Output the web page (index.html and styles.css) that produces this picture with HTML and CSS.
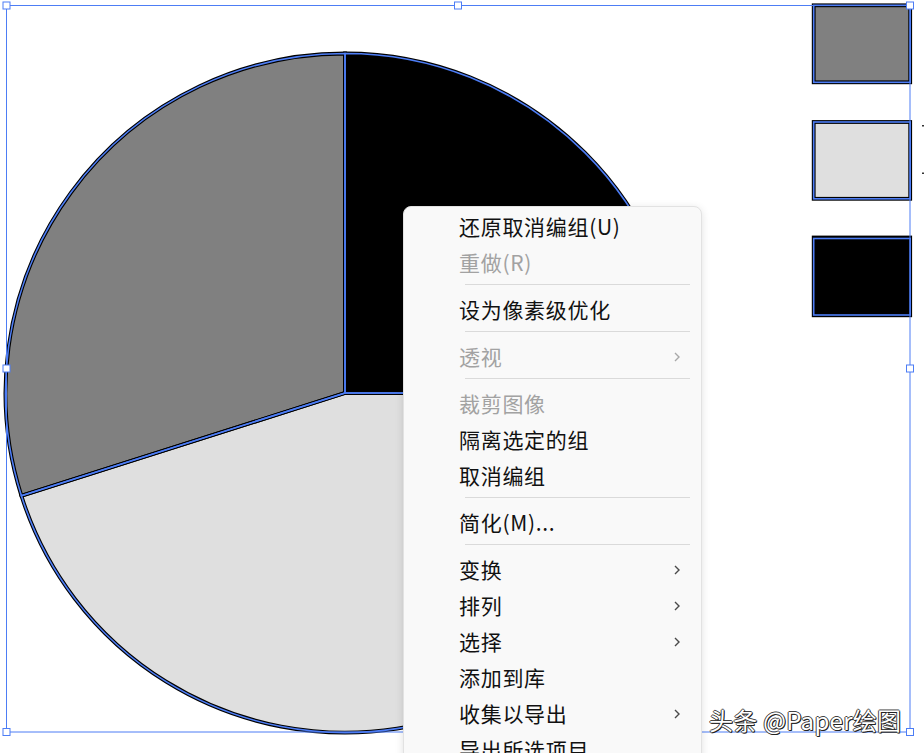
FILE: index.html
```html
<!DOCTYPE html>
<html lang="zh-CN">
<head>
    <meta charset="UTF-8">
    <meta name="viewport" content="width=device-width, initial-scale=1.0">
    <title>取消编组</title>
    <link rel="stylesheet" href="styles.css">
</head>
<body>
    <div class="artboard">
        <svg class="canvas" width="924" height="753" viewBox="0 0 924 753">
            <!-- pie slices -->
            <g>
                <path class="slice-dark" d="M345,393 L345,53.5 A339.5,339.5 0 0 1 684.5,393 Z"/>
                <path class="slice-light" d="M345,393 L684.5,393 A339.5,339.5 0 0 1 21.4,495.8 Z"/>
                <path class="slice-mid" d="M345,393 L21.4,495.8 A339.5,339.5 0 0 1 345,53.5 Z"/>
            </g>
            <g class="outline">
                <path d="M345,393 L345,53.5 A339.5,339.5 0 0 1 684.5,393 Z"/>
                <path d="M345,393 L684.5,393 A339.5,339.5 0 0 1 21.4,495.8 Z"/>
                <path d="M345,393 L21.4,495.8 A339.5,339.5 0 0 1 345,53.5 Z"/>
            </g>
            <g class="highlight">
                <path d="M345,393 L345,53.5 A339.5,339.5 0 0 1 684.5,393 Z"/>
                <path d="M345,393 L684.5,393 A339.5,339.5 0 0 1 21.4,495.8 Z"/>
                <path d="M345,393 L21.4,495.8 A339.5,339.5 0 0 1 345,53.5 Z"/>
            </g>

            <!-- legend swatches -->
            <g>
                <rect class="slice-mid" x="813.7" y="5.3" width="96.5" height="77"/>
                <rect class="slice-light" x="813.7" y="122" width="96.5" height="76.8"/>
                <rect class="slice-dark" x="813.7" y="237.5" width="96.5" height="77.8"/>
            </g>
            <g class="outline">
                <rect x="813.7" y="5.3" width="96.5" height="77"/>
                <rect x="813.7" y="122" width="96.5" height="76.8"/>
                <rect x="813.7" y="237.5" width="96.5" height="77.8"/>
            </g>
            <g class="highlight">
                <rect x="813.7" y="5.3" width="96.5" height="77"/>
                <rect x="813.7" y="122" width="96.5" height="76.8"/>
                <rect x="813.7" y="238.5" width="96.5" height="76.5"/>
            </g>
            <g class="ticks">
                <rect x="922" y="125" width="2" height="1.5"/>
                <rect x="922" y="172.5" width="2" height="1.5"/>
            </g>

            <!-- selection box -->
            <rect class="bbox" x="6.5" y="5.5" width="903.5" height="726.5"/>
            <g class="handles">
                <rect x="3" y="2" width="7" height="7"/>
                <rect x="454.5" y="2" width="7" height="7"/>
                <rect x="906.5" y="2" width="7" height="7"/>
                <rect x="3" y="365" width="7" height="7"/>
                <rect x="906.5" y="365" width="7" height="7"/>
                <rect x="3" y="728.5" width="7" height="7"/>
                <rect x="454.5" y="728.5" width="7" height="7"/>
                <rect x="906.5" y="728.5" width="7" height="7"/>
            </g>
        </svg>

        <ul class="menu">
            <li class="item">还原取消编组(U)</li>
            <li class="item off">重做(R)</li>
            <li class="sep"></li>
            <li class="item">设为像素级优化</li>
            <li class="sep"></li>
            <li class="item off">透视<svg class="chev" viewBox="0 0 6 10"><path d="M1,1 L5,5 L1,9"/></svg></li>
            <li class="sep"></li>
            <li class="item off">裁剪图像</li>
            <li class="item">隔离选定的组</li>
            <li class="item">取消编组</li>
            <li class="sep"></li>
            <li class="item">简化(M)...</li>
            <li class="sep"></li>
            <li class="item">变换<svg class="chev" viewBox="0 0 6 10"><path d="M1,1 L5,5 L1,9"/></svg></li>
            <li class="item">排列<svg class="chev" viewBox="0 0 6 10"><path d="M1,1 L5,5 L1,9"/></svg></li>
            <li class="item">选择<svg class="chev" viewBox="0 0 6 10"><path d="M1,1 L5,5 L1,9"/></svg></li>
            <li class="item">添加到库</li>
            <li class="item">收集以导出<svg class="chev" viewBox="0 0 6 10"><path d="M1,1 L5,5 L1,9"/></svg></li>
            <li class="item">导出所选项目</li>
        </ul>

        <p class="watermark">头条 @Paper绘图</p>
    </div>
</body>
</html>
```

FILE: styles.css
```css
html, body {
    margin: 0;
    padding: 0;
    height: 753px;
    overflow: hidden;
    background: #ffffff;
}

.artboard {
    position: relative;
    width: 924px;
    height: 753px;
    overflow: hidden;
}

.canvas {
    display: block;
}

.slice-dark {
    fill: #000000;
}

.slice-mid {
    fill: #808080;
}

.slice-light {
    fill: #dfdfdf;
}

.outline path,
.outline rect {
    fill: none;
    stroke: #000000;
    stroke-width: 3.8;
}

/* blue path highlight over the black strokes */
.highlight path,
.highlight rect {
    fill: none;
    stroke: #4d7df5;
    stroke-width: 1.6;
}

.ticks rect {
    fill: #333333;
}

.bbox {
    fill: none;
    stroke: #4d7df5;
    stroke-width: 1;
}

.handles rect {
    fill: #ffffff;
    stroke: #4d7df5;
    stroke-width: 1;
}

.menu {
    position: absolute;
    left: 403px;
    top: 206px;
    width: 297px;
    margin: 0;
    padding: 3px 0 0 0;
    list-style: none;
    background: #f9f9f9;
    border: 1px solid #e2e2e2;
    border-radius: 8px;
    box-shadow: 0 2px 8px rgba(0, 0, 0, 0.12);
    font-family: "Noto Sans CJK SC", "Noto Sans", sans-serif;
    font-size: 21px;
    letter-spacing: 0.7px;
    color: #111111;
}

.item {
    position: relative;
    height: 36px;
    line-height: 33px;
    padding-left: 55px;
    white-space: nowrap;
}

.off {
    color: #a2a2a2;
}

.sep {
    height: 1px;
    margin: 2px 11px 8px 61px;
    background: #dadada;
}

.chev {
    position: absolute;
    right: 21px;
    top: 12px;
    width: 6px;
    height: 10px;
    fill: none;
    stroke: #4a4a4a;
    stroke-width: 1.4;
}

.off .chev {
    stroke: #a8a8a8;
}

.watermark {
    position: absolute;
    left: 709px;
    top: 702px;
    margin: 0;
    font-family: "Noto Sans CJK SC", "Noto Sans", sans-serif;
    font-size: 24px;
    letter-spacing: 0.3px;
    color: #ffffff;
    white-space: nowrap;
    text-shadow: 1px 1px 0 #222, -1px 0 0 #444, 0 -1px 0 #444, 1px 0 0 #444, 0 1px 0 #444;
}
```
